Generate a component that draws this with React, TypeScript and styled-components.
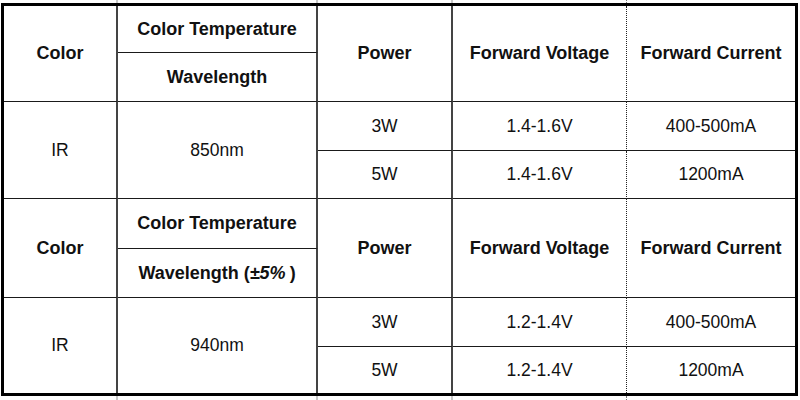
import React from 'react';
import styled, { createGlobalStyle } from 'styled-components';

const columns = '114px 200px 135px 174px 168px';

const GlobalStyle = createGlobalStyle`
  html, body {
    margin: 0;
    padding: 0;
    background: #fff;
  }
  body {
    font-family: 'Liberation Sans', Arial, sans-serif;
    color: #111;
  }
`;

const Page = styled.div`
  width: 800px;
  height: 400px;
  overflow: hidden;
  background: #fff;
`;

// faint column lines of the neighbouring rows, cropped off by the screenshot
const Edge = styled.div<{ $h: number }>`
  display: grid;
  grid-template-columns: ${columns};
  height: ${(p) => p.$h}px;
  margin-left: 4px;
`;

const EdgeCell = styled.div<{ $dotted?: boolean; $none?: boolean }>`
  border-right: ${(p) =>
    p.$none ? 'none' : p.$dotted ? '1px dotted #777' : '2px solid #c8c8c8'};
`;

const Sheet = styled.div`
  display: grid;
  grid-template-columns: ${columns};
  grid-template-rows: 47px 49px 49px 48px 50px 49px 49px 46px;
  width: fit-content;
  margin-left: 1px;
  border: 3px solid #000;
`;

const Cell = styled.div<{
  $head?: boolean;
  $span?: number;
  $dotted?: boolean;
  $lastCol?: boolean;
  $lastRow?: boolean;
}>`
  box-sizing: border-box;
  display: flex;
  align-items: center;
  justify-content: center;
  grid-row: span ${(p) => p.$span || 1};
  font-size: ${(p) => (p.$head ? '18px' : '17.5px')};
  font-weight: ${(p) => (p.$head ? 700 : 400)};
  white-space: nowrap;
  border-right: ${(p) =>
    p.$lastCol ? 'none' : p.$dotted ? '1px dotted #222' : '2px solid #444'};
  border-bottom: ${(p) => (p.$lastRow ? 'none' : '1px solid #1a1a1a')};
`;

const Tol = styled.span`
  font-style: italic;
  margin-right: 4px;
`;

interface Block {
  wavelength: React.ReactNode;
  peak: string;
  rows: { power: string; voltage: string; current: string }[];
}

const blocks: Block[] = [
  {
    wavelength: 'Wavelength',
    peak: '850nm',
    rows: [
      { power: '3W', voltage: '1.4-1.6V', current: '400-500mA' },
      { power: '5W', voltage: '1.4-1.6V', current: '1200mA' },
    ],
  },
  {
    wavelength: (
      <>
        Wavelength (<Tol>±5%</Tol>)
      </>
    ),
    peak: '940nm',
    rows: [
      { power: '3W', voltage: '1.2-1.4V', current: '400-500mA' },
      { power: '5W', voltage: '1.2-1.4V', current: '1200mA' },
    ],
  },
];

const EdgeLine = ({ h }: { h: number }) => (
  <Edge $h={h}>
    <EdgeCell />
    <EdgeCell />
    <EdgeCell />
    <EdgeCell $dotted />
    <EdgeCell $none />
  </Edge>
);

const App = () => {
  return (
    <Page>
      <GlobalStyle />
      <EdgeLine h={3} />
      <Sheet>
        {blocks.map((b, bi) => {
          const lastBlock = bi === blocks.length - 1;
          return (
            <React.Fragment key={bi}>
              <Cell $head $span={2}>Color</Cell>
              <Cell $head>Color Temperature</Cell>
              <Cell $head $span={2}>Power</Cell>
              <Cell $head $span={2} $dotted>Forward Voltage</Cell>
              <Cell $head $span={2} $lastCol>Forward Current</Cell>
              <Cell $head>{b.wavelength}</Cell>

              <Cell $span={2} $lastRow={lastBlock}>IR</Cell>
              <Cell $span={2} $lastRow={lastBlock}>{b.peak}</Cell>
              {b.rows.map((r, ri) => {
                const last = lastBlock && ri === b.rows.length - 1;
                return (
                  <React.Fragment key={ri}>
                    <Cell $lastRow={last}>{r.power}</Cell>
                    <Cell $lastRow={last} $dotted>{r.voltage}</Cell>
                    <Cell $lastRow={last} $lastCol>{r.current}</Cell>
                  </React.Fragment>
                );
              })}
            </React.Fragment>
          );
        })}
      </Sheet>
      <EdgeLine h={4} />
    </Page>
  );
};

export default App;
